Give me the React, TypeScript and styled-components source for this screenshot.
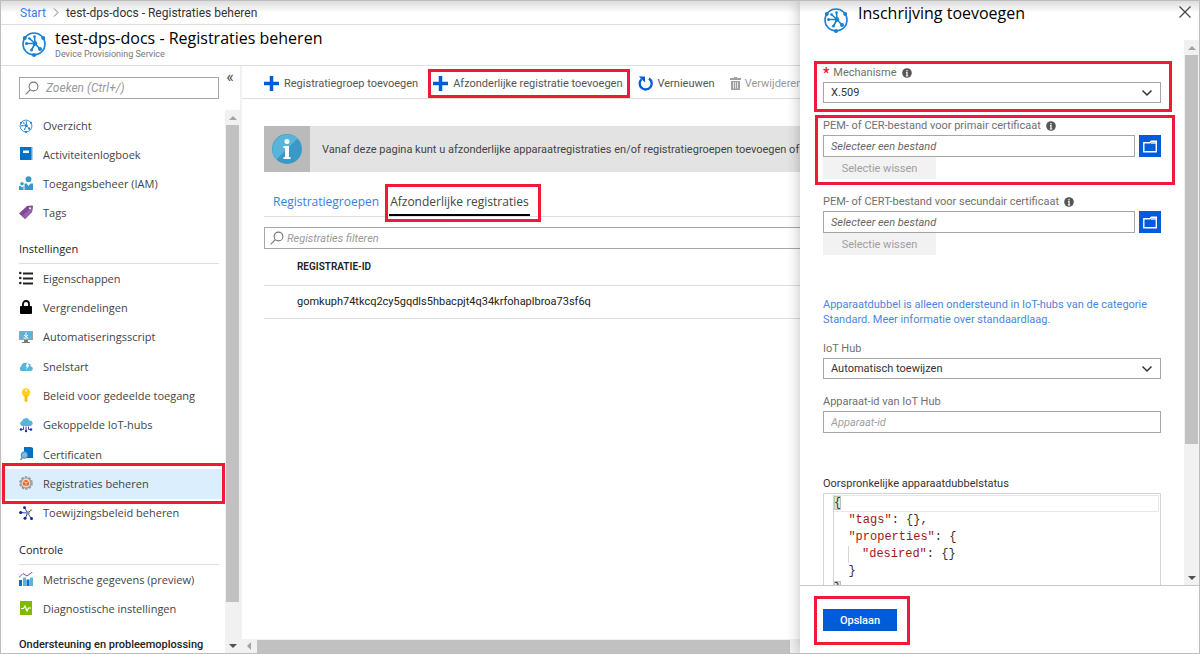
import React, { ReactNode } from 'react';
import styled, { createGlobalStyle } from 'styled-components';

const heading = '"Open Sans", "Segoe UI", sans-serif';
const body = 'Roboto, "Segoe UI", sans-serif';
const mono = '"Liberation Mono", Consolas, monospace';
const blue = '#015cda';
const link = '#3b7de0';
const topShade = 'linear-gradient(#dcdcdc, #ffffff 12px)';

const GlobalStyle = createGlobalStyle`
  * { box-sizing: border-box; }
  body { margin: 0; background: #fff; font-family: ${body}; font-size: 11px; color: #444; }
  button, input, select { font: inherit; color: inherit; border-radius: 0; }
  h1, h2, h3, ul, p, pre { margin: 0; padding: 0; font-weight: 400; font-size: inherit; }
`;

const Frame = styled.div`
  display: flex;
  height: 100vh;
  border: 1px solid #bdbdbd;
  overflow: hidden;
`;

const Main = styled.main`
  flex: 1;
  min-width: 0;
  display: flex;
  flex-direction: column;
`;

const Breadcrumb = styled.nav`
  display: flex;
  align-items: center;
  gap: 7px;
  height: 24px;
  padding-left: 19px;
  border-bottom: 1px solid #dedede;
  background: ${topShade};
  font-size: 12px;
  line-height: 16px;
  color: #333;
  flex-shrink: 0;
  a { color: ${link}; text-decoration: none; }
`;

const BladeHeader = styled.header`
  display: flex;
  align-items: center;
  gap: 8px;
  height: 41px;
  padding: 0 0 2px 20px;
  border-bottom: 1px solid #dedede;
  flex-shrink: 0;
`;

const Title = styled.h1`
  font: 500 16px/20px ${heading};
  color: #000;
`;

const Subtitle = styled.p`
  font-size: 9px;
  line-height: 12px;
  color: #777;
`;

const Columns = styled.div`
  flex: 1;
  min-height: 0;
  display: flex;
`;

const Sidebar = styled.aside`
  width: 241px;
  flex-shrink: 0;
  display: flex;
  flex-direction: column;
  border-right: 2px solid #f1f1f1;
`;

const SearchRow = styled.div`
  display: flex;
  align-items: flex-start;
  gap: 5px;
  height: 44px;
  padding: 11px 0 0 18px;
  flex-shrink: 0;
`;

const SearchBox = styled.label<{ $open?: boolean }>`
  display: flex;
  align-items: center;
  gap: ${p => (p.$open ? 3 : 7)}px;
  height: 22px;
  padding-left: 5px;
  border: 1px solid #a6a6a6;
  border-right-width: ${p => (p.$open ? 0 : 1)}px;
  flex: 1;
  min-width: 0;
  input {
    flex: 1;
    min-width: 0;
    border: 0;
    padding: 0;
    outline: 0;
    background: none;
    font-style: italic;
  }
  input::placeholder { color: #999; }
`;

const SidebarSearch = styled(SearchBox)`
  flex: 0 0 200px;
  input { font-size: 12px; }
`;

const Collapse = styled.button`
  border: 0;
  padding: 0;
  width: 12px;
  height: 14px;
  margin-top: -7px;
  background: none;
  font-size: 16px;
  line-height: 12px;
  display: flex;
  align-items: center;
  justify-content: center;
`;

const MenuArea = styled.div`
  flex: 1;
  min-height: 0;
  display: flex;
  overflow: hidden;
`;

const MenuScroll = styled.div`
  flex: 1;
  overflow: hidden;
  padding-top: 1px;
`;

const MenuList = styled.ul<{ $height: number }>`
  display: grid;
  grid-auto-rows: 1fr;
  height: ${p => p.$height}px;
  list-style: none;
`;

const MenuLink = styled.a<{ $active?: boolean }>`
  display: flex;
  align-items: center;
  gap: 10px;
  height: 100%;
  padding-left: 18px;
  background: ${p => (p.$active ? '#dbeefe' : 'transparent')};
  font: 11px/16px ${heading};
  color: #444;
  text-decoration: none;
  white-space: nowrap;
  svg { flex-shrink: 0; }
`;

const MenuHeading = styled.h2`
  height: 37px;
  padding: 13px 0 5px;
  margin: 0 6px 0 18px;
  border-bottom: 1px solid #dedede;
  font: 500 11px/18px ${heading};
  color: #222;
  white-space: nowrap;
`;

const BottomHeading = styled(MenuHeading)`
  font: 500 11px/18px ${body};
  border-bottom: 0;
`;

const Marked = styled.div<{ $inset?: string }>`
  position: relative;
  &::after {
    content: '';
    position: absolute;
    inset: ${p => p.$inset ?? '0'};
    border: 3px solid #f01a37;
    pointer-events: none;
    z-index: 2;
  }
`;

const MarkedItem = styled(Marked).attrs({ as: 'li' })``;

const Rail = styled.div`
  width: 15px;
  flex-shrink: 0;
  display: flex;
  flex-direction: column;
  align-items: center;
  background: #f1f1f1;
`;

const RailArrow = styled.div<{ $dark?: boolean }>`
  height: 15px;
  display: flex;
  align-items: center;
  color: ${p => (p.$dark ? '#505050' : '#a3a3a3')};
`;

const Thumb = styled.div<{ $grow: number }>`
  width: 13px;
  flex: ${p => p.$grow} 1 0;
  background: #c1c1c1;
`;

const RailGap = styled.div<{ $grow: number }>`
  flex: ${p => p.$grow} 1 0;
`;

const Content = styled.section`
  flex: 1;
  min-width: 0;
  display: flex;
  flex-direction: column;
  overflow: hidden;
`;

const Toolbar = styled.div`
  display: flex;
  align-items: center;
  gap: 15px;
  height: 33px;
  padding: 2px 0 0 22px;
  border-bottom: 1px solid #dedede;
  flex-shrink: 0;
`;

const ToolButton = styled.button`
  display: flex;
  align-items: center;
  gap: 5px;
  border: 0;
  padding: 0;
  height: 22px;
  background: none;
  white-space: nowrap;
  color: #555;
  &:disabled { color: #999; gap: 4px; }
`;

const Blade = styled.div`
  flex: 1;
  min-height: 0;
  padding: 27px 0 0 22px;
`;

const Banner = styled.div`
  display: flex;
  align-items: center;
  gap: 12px;
  height: 46px;
  background: #e3e3e3;
  white-space: nowrap;
  overflow: hidden;
`;

const BannerIcon = styled.div`
  width: 46px;
  height: 46px;
  flex-shrink: 0;
  display: grid;
  place-items: center;
  background: #bababa;
`;

const Tabs = styled.div`
  display: flex;
  gap: 9px;
  height: 45px;
  padding: 14px 0 0 8px;
  border-bottom: 1px solid #dedede;
  margin-bottom: 10px;
`;

const Tab = styled.button<{ $active?: boolean }>`
  border: 0;
  border-bottom: 2px solid ${p => (p.$active ? '#000' : 'transparent')};
  padding: 4px 1px 0;
  height: 30px;
  background: none;
  font: 12px/24px ${heading};
  color: ${p => (p.$active ? '#444' : link)};
`;

const Table = styled.table`
  width: 100%;
  border-collapse: collapse;
  th, td {
    padding: 0 0 0 33px;
    border-bottom: 1px solid #dedede;
    text-align: left;
    color: #222;
  }
  th { height: 36px; font-weight: 600; font-size: 10px; }
  td { height: 33px; }
`;

const BottomRail = styled.div`
  display: flex;
  align-items: center;
  height: 14px;
  padding: 0 10px 0 3px;
  gap: 4px;
  background: #f1f1f1;
  color: #a3a3a3;
  flex-shrink: 0;
`;

const BottomThumb = styled.div`
  flex: 1;
  height: 13px;
  background: #c1c1c1;
`;

const Panel = styled.section`
  width: 399px;
  flex-shrink: 0;
  display: flex;
  flex-direction: column;
  background: #fff;
  box-shadow: -1px 0 12px rgba(0, 0, 0, 0.24);
  z-index: 1;
`;

const PanelHeader = styled.header`
  display: flex;
  align-items: flex-start;
  gap: 9px;
  height: 39px;
  padding: 2px 6px 0 23px;
  background: ${topShade};
  flex-shrink: 0;
  > svg { margin-top: 4px; }
`;

const CloseButton = styled.button`
  margin-left: auto;
  border: 0;
  padding: 0;
  width: 16px;
  height: 20px;
  background: none;
`;

const PanelBody = styled.div`
  flex: 1;
  min-height: 0;
  display: flex;
`;

const Form = styled.form`
  flex: 1;
  min-width: 0;
  padding: 23px 23px 0 23px;
  overflow: hidden;
`;

const Field = styled.div<{ $after?: number }>`
  margin-bottom: ${p => p.$after ?? 0}px;
`;

const Label = styled.label<{ $dark?: boolean }>`
  display: flex;
  align-items: center;
  gap: 5px;
  height: 19px;
  line-height: 18px;
  color: ${p => (p.$dark ? '#333' : '#707070')};
`;

const Required = styled.span`
  color: #e81123;
  font-size: 14px;
  line-height: 18px;
  font-weight: 700;
  margin-right: -1px;
`;

const SelectBox = styled.div`
  display: grid;
  align-items: center;
  > * { grid-area: 1 / 1; }
  svg { justify-self: end; margin-right: 8px; pointer-events: none; }
`;

const Select = styled.select`
  appearance: none;
  width: 100%;
  height: 21px;
  border: 1px solid #a6a6a6;
  background: #fff;
  padding: 0 24px 0 7px;
  color: #333;
`;

const Input = styled.input<{ $pale?: boolean }>`
  flex: 1;
  min-width: 0;
  width: 100%;
  height: 22px;
  border: 1px solid #a6a6a6;
  padding: 0 7px;
  &::placeholder { color: ${p => (p.$pale ? '#a0a0a0' : '#666')}; font-style: italic; opacity: 1; }
`;

const FileRow = styled.div`
  display: flex;
  gap: 4px;
`;

const BrowseButton = styled.button`
  width: 22px;
  height: 22px;
  border: 0;
  padding: 0;
  display: grid;
  place-items: center;
  background: ${blue};
`;

const ClearButton = styled.button`
  display: block;
  width: 113px;
  height: 22px;
  border: 0;
  padding: 0;
  background: #f2f2f2;
  &:disabled { color: #a0a0a0; }
`;

const Notice = styled.a`
  display: block;
  margin-bottom: 12px;
  line-height: 15px;
  color: #4a86e2;
  text-decoration: none;
`;

const Editor = styled.div`
  height: 120px;
  border: 1px solid #d4d4d4;
  padding: 1px 1px 0 9px;
`;

const Code = styled.pre`
  border-left: 1px solid #d4d4d4;
  font: 12px/17px ${mono};
  color: #333;
`;

const FirstLine = styled.div`
  border: 1px solid #e8e8e8;
  border-left: 0;
  line-height: 15px;
`;

const Brace = styled.span`
  background: #dde9dd;
  outline: 1px solid #b9c4b9;
  outline-offset: -1px;
`;

const Key = styled.span`
  color: #a31515;
`;

const Guide = styled.span`
  display: inline-block;
  width: 14px;
  height: 17px;
  margin-left: 14px;
  border-left: 1px solid #d4d4d4;
  vertical-align: top;
`;

const PanelFooter = styled.footer`
  height: 68px;
  padding: 23px 23px;
  border-top: 1px solid #c6c6c6;
  flex-shrink: 0;
  display: flex;
  align-items: flex-start;
`;

const SaveButton = styled.button`
  display: block;
  width: 74px;
  height: 22px;
  border: 0;
  padding: 0;
  background: ${blue};
  color: #fff;
  font-weight: 500;
`;

const DpsLogo = ({ size = 26 }: { size?: number }) => (
  <svg width={size} height={size} viewBox="0 0 26 26" fill="none" stroke="#1b80cf" strokeWidth="1.6">
    <circle cx="13" cy="13" r="11" />
    <path d="M14 12.500 5.500 12.500M14 12.500 8.500 7.500M14 12.500 13.500 5.500M14 12.500 10.500 19M14 12.500 19 18" />
    <g fill="#1b80cf" stroke="none">
      <circle cx="14" cy="12.500" r="2.300" /><circle cx="5.500" cy="12.500" r="1.500" />
      <circle cx="8.500" cy="7.500" r="1.300" /><circle cx="13.500" cy="5.500" r="1.300" />
      <circle cx="10.500" cy="19" r="1.500" /><circle cx="19" cy="18" r="2" />
      <circle cx="3.800" cy="7" r="2" /><circle cx="22.200" cy="7" r="2" /><circle cx="13" cy="24" r="2" />
    </g>
  </svg>
);

const icons: Record<string, ReactNode> = {
  log: <><path d="M1 0h12v13H1z" fill="#0072c6" /><path d="M12 0h1.500v13H12z" fill="#5aa7df" /><path d="M4 3.500h6v2.500H4z" fill="#fff" /></>,
  iam: <g fill="#3999c6"><circle cx="9.500" cy="3.200" r="2.900" /><circle cx="3" cy="7.800" r="1.700" /><path d="M5.500 14V7.500h2l2 2.500 2-2.500H14V14zM0 14v-4h1.500L3 11.500 4.500 10v4z" /></g>,
  tag: <><path d="M0 8.500 8 1l5-.5q1 0 1 1L13 7l-7 7z" fill="#804998" /><path d="M3 11 13.500 1.500 13 7l-7 7z" fill="#9263a8" /><circle cx="11" cy="3.200" r="1" fill="#fff" /></>,
  list: <><path d="M4 2.500h10M4 7.500h10M4 12.500h10" stroke="#222" strokeWidth="2" /><g fill="#222"><circle cx="1.300" cy="2" r="1.300" /><circle cx="1.300" cy="7" r="1.300" /><circle cx="1.300" cy="12" r="1.300" /></g></>,
  lock: <><path d="M4 7V4a3 3 0 0 1 6 0v3" fill="none" stroke="#000" strokeWidth="1.800" /><rect x="1" y="6" width="12" height="8" rx="1" fill="#000" /></>,
  script: <><path d="M0 1h14v9H0z" fill="#a0a1a2" /><path d="M1 2h12v7H1z" fill="#59b4d9" /><path d="M5 10h4v2h2v1H3v-1h2z" fill="#7a7a7a" /><path d="M7 2.500V7M5 5l2 2 2-2M4.500 8h5" fill="none" stroke="#fff" /></>,
  quick: <><path d="M2 12a2.500 2.500 0 0 1 .3-4.500A3.500 3.500 0 0 1 7 4a4 4 0 0 1 5 3.500A2.300 2.300 0 0 1 12 12z" fill="#59b4d9" /><path d="M8.500 3 6.500 7.500H8L7 11l3.500-5H9l1.500-3z" fill="#fff" /></>,
  key: <><circle cx="7" cy="4.500" r="4.200" fill="#fcd116" /><path d="M5.500 7h3v6L7 14.500 5.500 13z" fill="#f5c30b" /><circle cx="7" cy="2.600" r="1" fill="#fff" /></>,
  hubs: <><path d="M3 8A2.600 2.600 0 0 1 3 3a4 4 0 0 1 7.500-.5A2.800 2.800 0 0 1 11.500 8z" fill="#59b4d9" /><path d="M4.500 8.500v3H2M7 8.500V13M9.500 8.500v3H12" fill="none" stroke="#3d4cab" /><g fill="#1e2fa0"><circle cx="2" cy="11.500" r="1.200" /><circle cx="7" cy="13" r="1.200" /><circle cx="12" cy="11.500" r="1.200" /></g></>,
  cert: <><path d="M5 0h7l2 1v10H5z" fill="#0072c6" /><circle cx="5.500" cy="8" r="3.300" fill="#7fb9de" stroke="#3c86b8" /><path d="M3.500 10.500 1.500 13" stroke="#888" strokeWidth="1.600" /></>,
  gear: <><circle cx="7" cy="7" r="5.800" fill="none" stroke="#9b9b9b" strokeWidth="2" strokeDasharray="2.400 1.240" /><circle cx="7" cy="7" r="5" fill="#e6e6e6" stroke="#9b9b9b" strokeWidth="1.200" /><path d="m7 3.800 3.200 1.400v3.600L7 10.500 3.800 8.800V5.200z" fill="#e8692b" /><path d="m4 5.400 3 1.300 3-1.300M7 6.700v3.500" fill="none" stroke="#fbe0cc" strokeWidth=".7" /></>,
  alloc: <><path d="M1.500 6.500 8.500 7M8.500 7 5.500 1.500M8.500 7l4-3M8.500 7l-2 5M8.500 7l4 5.500" stroke="#3949a8" strokeWidth="1" /><g fill="#15209a"><circle cx="1.700" cy="6.500" r="1.600" /><circle cx="5.500" cy="1.700" r="1.400" /><circle cx="6" cy="12.300" r="1.500" /><circle cx="12.500" cy="12.500" r="1.500" /></g><circle cx="9" cy="7" r="1.800" fill="#8a8fa0" /><circle cx="12.300" cy="4" r="1" fill="#e8a33b" /></>,
  metric: <><path d="M0 8h3v6H0zM7.500 7.500h3V14h-3z" fill="#0072c6" /><path d="M4 5.500h3V14H4zM11 5.500h3V14h-3z" fill="#59b4d9" /><path d="m0 5.500 4-4 4 2.500 5.500-4" fill="none" stroke="#804998" /></>,
  diag: <><path d="M1 0h12v14H1z" fill="#7fba00" /><path d="M2 7.500h2.500L6 5l2 5 1.500-3H12" fill="none" stroke="#fff" strokeWidth="1.200" /></>,
};

const Glyph = ({ name }: { name: string }) =>
  name === 'dps' ? <DpsLogo size={14} /> : <svg width="14" height="15" viewBox="0 0 14 15">{icons[name]}</svg>;

const PlusIcon = () => (
  <svg width="15" height="15" viewBox="0 0 15 15"><path d="M7.500 0v15M0 7.500h15" stroke={blue} strokeWidth="3.500" /></svg>
);
const RefreshIcon = () => (
  <svg width="15" height="15" viewBox="0 0 15 15">
    <path d="M11 2.500A6 6 0 1 1 3.500 3.200" fill="none" stroke={blue} strokeWidth="2.300" />
    <path d="M.8.500h6.200v6z" fill={blue} />
  </svg>
);
const BinIcon = () => (
  <svg width="11" height="13" viewBox="0 0 11 13">
    <path d="M4 0h3v1h4v2H0V1h4zM1 4h9v9H1z" fill="#a0a0a0" /><path d="M3.500 5v6.500M5.500 5v6.500M7.500 5v6.500" stroke="#fff" strokeWidth=".7" />
  </svg>
);
const Magnifier = () => (
  <svg width="14" height="14" viewBox="0 0 14 14" fill="none" stroke="#777" strokeWidth="1.100">
    <circle cx="8.500" cy="5.500" r="4.400" /><path d="M5.400 8.600.7 13.300" />
  </svg>
);
const InfoDot = () => (
  <svg width="10" height="10" viewBox="0 0 10 10"><circle cx="5" cy="5" r="4.800" fill="#555" /><path d="M5 2v1.400M4 4.600h1V8M3.800 8h2.500" stroke="#fff" strokeWidth="1.200" fill="none" /></svg>
);
const Chevron = () => (
  <svg width="12" height="8" viewBox="0 0 12 8"><path d="m1.500 1.500 4.500 4.500 4.500-4.500" fill="none" stroke="#333" strokeWidth="1.500" /></svg>
);
const Folder = () => (
  <svg width="14" height="13" viewBox="0 0 14 13"><path d="M.8 11.800V2.800h6l1.500-1.500h5v10.500z" fill={blue} stroke="#fff" strokeWidth="1.400" /><path d="M8 3h5" stroke="#fff" strokeWidth="1.400" /></svg>
);
const Arrow = ({ d }: { d: string }) => (
  <svg width="8" height="8" viewBox="0 0 8 8"><path d={d} fill="currentColor" /></svg>
);

type Item = [icon: string, text: string];

const general: Item[] = [['dps', 'Overzicht'], ['log', 'Activiteitenlogboek'], ['iam', 'Toegangsbeheer (IAM)'], ['tag', 'Tags']];
const settings: Item[] = [
  ['list', 'Eigenschappen'], ['lock', 'Vergrendelingen'], ['script', 'Automatiseringsscript'],
  ['quick', 'Snelstart'], ['key', 'Beleid voor gedeelde toegang'], ['hubs', 'Gekoppelde IoT-hubs'],
  ['cert', 'Certificaten'], ['gear', 'Registraties beheren'], ['alloc', 'Toewijzingsbeleid beheren'],
];
const monitoring: Item[] = [['metric', 'Metrische gegevens (preview)'], ['diag', 'Diagnostische instellingen']];

const Menu = ({ items, height, active }: { items: Item[]; height: number; active?: string }) => (
  <MenuList $height={height}>
    {items.map(([icon, text]) =>
      text === active ? (
        <MarkedItem key={text} $inset="-6px 0 -5px 1px">
          <MenuLink href="#" $active aria-current="page"><Glyph name={icon} />{text}</MenuLink>
        </MarkedItem>
      ) : (
        <li key={text}><MenuLink href="#"><Glyph name={icon} />{text}</MenuLink></li>
      ),
    )}
  </MenuList>
);

const VerticalRail = ({ thumb, rest }: { thumb: number; rest: number }) => (
  <Rail aria-hidden>
    <RailArrow><Arrow d="M0 6 4 2l4 4z" /></RailArrow>
    <Thumb $grow={thumb} />
    <RailGap $grow={rest} />
    <RailArrow $dark><Arrow d="M0 2h8L4 6z" /></RailArrow>
  </Rail>
);

const FileField = ({ id, label }: { id: string; label: string }) => (
  <>
    <Label htmlFor={id}>{label} <InfoDot /></Label>
    <FileRow>
      <Input id={id} placeholder="Selecteer een bestand" readOnly />
      <BrowseButton type="button" aria-label="Bladeren"><Folder /></BrowseButton>
    </FileRow>
    <ClearButton type="button" disabled>Selectie wissen</ClearButton>
  </>
);

export default function App() {
  return (
    <Frame>
      <GlobalStyle />
      <Main>
        <Breadcrumb>
          <a href="#">Start</a>
          <svg width="6" height="9" viewBox="0 0 6 9"><path d="m1 .5 4 4-4 4" fill="none" stroke="#777" /></svg>
          <span>test-dps-docs - Registraties beheren</span>
        </Breadcrumb>
        <BladeHeader>
          <DpsLogo />
          <div>
            <Title>test-dps-docs - Registraties beheren</Title>
            <Subtitle>Device Provisioning Service</Subtitle>
          </div>
        </BladeHeader>
        <Columns>
          <Sidebar>
            <SearchRow>
              <SidebarSearch><Magnifier /><input placeholder="Zoeken (Ctrl+/)" aria-label="Zoeken" /></SidebarSearch>
              <Collapse aria-label="Menu samenvouwen">«</Collapse>
            </SearchRow>
            <MenuArea>
              <MenuScroll>
                <Menu items={general} height={116} />
                <MenuHeading>Instellingen</MenuHeading>
                <Menu items={settings} height={264} active="Registraties beheren" />
                <MenuHeading>Controle</MenuHeading>
                <Menu items={monitoring} height={58} />
                <BottomHeading>Ondersteuning en probleemoplossing</BottomHeading>
              </MenuScroll>
              <VerticalRail thumb={477} rest={36} />
            </MenuArea>
          </Sidebar>
          <Content>
            <Toolbar>
              <ToolButton><PlusIcon />Registratiegroep toevoegen</ToolButton>
              <Marked $inset="-3px -7px -4px -5px">
                <ToolButton><PlusIcon />Afzonderlijke registratie toevoegen</ToolButton>
              </Marked>
              <ToolButton><RefreshIcon />Vernieuwen</ToolButton>
              <ToolButton disabled><BinIcon />Verwijderen</ToolButton>
            </Toolbar>
            <Blade>
              <Banner>
                <BannerIcon>
                  <svg width="30" height="30" viewBox="0 0 30 30">
                    <circle cx="15" cy="15" r="15" fill="#3999c6" /><path d="M4.400 25.600A15 15 0 0 1 25.600 4.400z" fill="#59b4d9" />
                    <circle cx="15" cy="7.500" r="2.500" fill="#fff" /><path d="M11.500 12h5.500v11h1.500v2h-7v-2H13v-9h-1.500z" fill="#fff" />
                  </svg>
                </BannerIcon>
                <span>Vanaf deze pagina kunt u afzonderlijke apparaatregistraties en/of registratiegroepen toevoegen of</span>
              </Banner>
              <Tabs role="tablist">
                <Tab role="tab">Registratiegroepen</Tab>
                <Marked $inset="-2px -11px -6px -4px"><Tab role="tab" aria-selected $active>Afzonderlijke registraties</Tab></Marked>
              </Tabs>
              <SearchBox $open><Magnifier /><input placeholder="Registraties filteren" aria-label="Registraties filteren" /></SearchBox>
              <Table>
                <thead><tr><th>REGISTRATIE-ID</th></tr></thead>
                <tbody><tr><td>gomkuph74tkcq2cy5gqdls5hbacpjt4q34krfohaplbroa73sf6q</td></tr></tbody>
              </Table>
            </Blade>
            <BottomRail aria-hidden><Arrow d="M6 0v8L2 4z" /><BottomThumb /></BottomRail>
          </Content>
        </Columns>
      </Main>
      <Panel>
        <PanelHeader>
          <DpsLogo />
          <Title as="h2">Inschrijving toevoegen</Title>
          <CloseButton aria-label="Sluiten">
            <svg width="12" height="12" viewBox="0 0 12 12"><path d="m.5.500 11 11M11.500.500l-11 11" stroke="#444" strokeWidth="1.200" /></svg>
          </CloseButton>
        </PanelHeader>
        <PanelBody>
          <Form onSubmit={e => e.preventDefault()}>
            <Field $after={13}>
              <Marked $inset="-2px -11px -9px -9px">
                <Label htmlFor="mechanism"><Required>*</Required>Mechanisme <InfoDot /></Label>
                <SelectBox><Select id="mechanism"><option>X.509</option></Select><Chevron /></SelectBox>
              </Marked>
            </Field>
            <Field $after={13}>
              <Marked $inset="-1px -14px -6px -8px">
                <FileField id="primary" label="PEM- of CER-bestand voor primair certificaat" />
              </Marked>
            </Field>
            <Field $after={42}>
              <FileField id="secondary" label="PEM- of CERT-bestand voor secundair certificaat" />
            </Field>
            <Notice href="#">Apparaatdubbel is alleen ondersteund in IoT-hubs van de categorie Standard. Meer informatie over standaardlaag.</Notice>
            <Field $after={13}>
              <Label htmlFor="hub">IoT Hub</Label>
              <SelectBox><Select id="hub"><option>Automatisch toewijzen</option></Select><Chevron /></SelectBox>
            </Field>
            <Field $after={41}>
              <Label htmlFor="device">Apparaat-id van IoT Hub</Label>
              <Input id="device" placeholder="Apparaat-id" $pale />
            </Field>
            <Label as="h3" $dark>Oorspronkelijke apparaatdubbelstatus</Label>
            <Editor>
              <Code>
                <FirstLine><Brace>{'{'}</Brace></FirstLine>
                <div>{'  '}<Key>"tags"</Key>{': {},'}</div>
                <div>{'  '}<Key>"properties"</Key>{': {'}</div>
                <div><Guide /><Key>"desired"</Key>{': {}'}</div>
                <div>{'  }'}</div>
                <div><Brace>{'}'}</Brace></div>
              </Code>
            </Editor>
          </Form>
          <VerticalRail thumb={388} rest={126} />
        </PanelBody>
        <PanelFooter>
          <Marked $inset="-13px -13px -14px -9px"><SaveButton>Opslaan</SaveButton></Marked>
        </PanelFooter>
      </Panel>
    </Frame>
  );
}
